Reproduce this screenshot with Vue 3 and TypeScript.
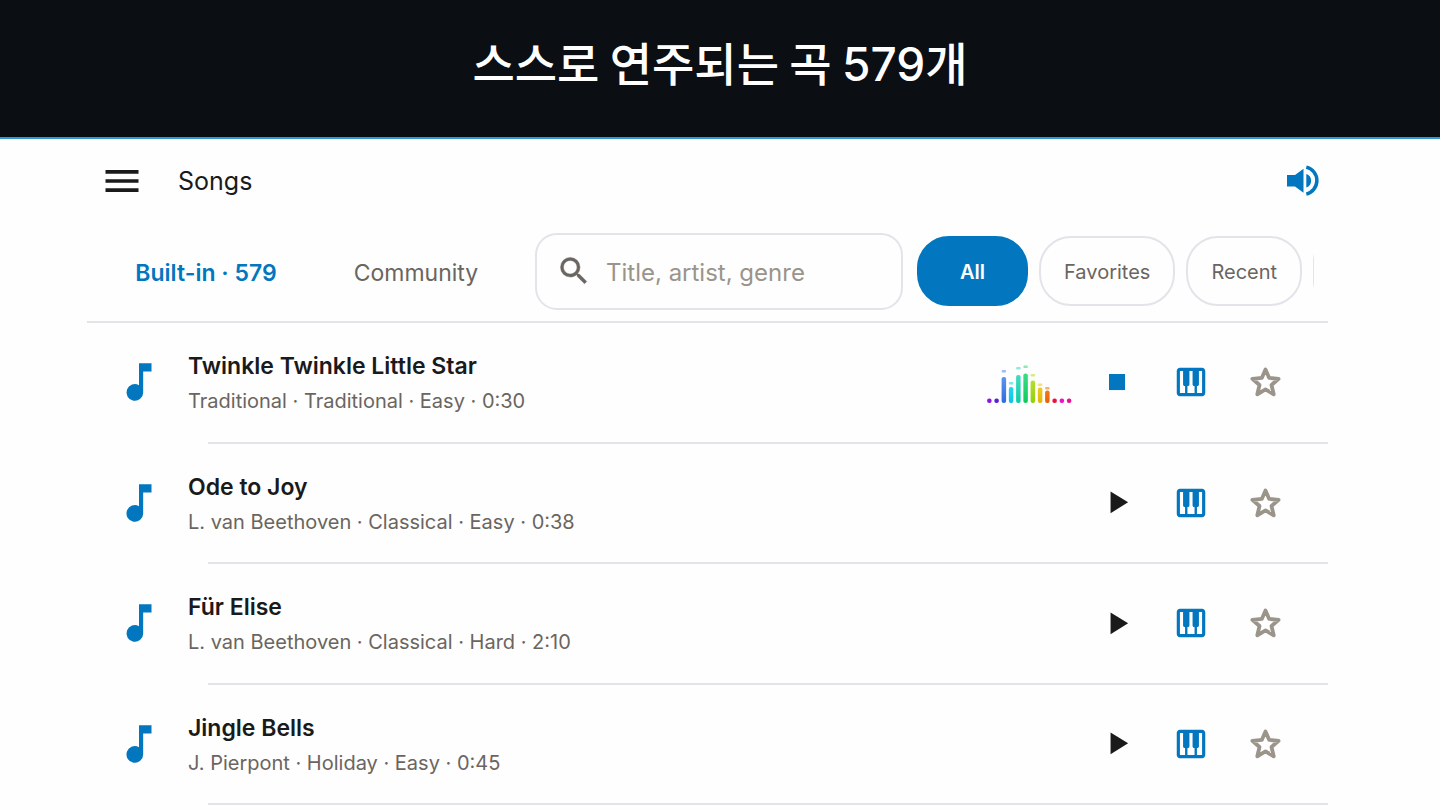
<script setup lang="ts">
import { ref } from 'vue'

interface Song {
  title: string
  composer: string
  genre: string
  level: string
  length: string
}

interface Bar {
  top: number
  peak: number | null
  from: string
  to: string
}

const songs: Song[] = [
  { title: 'Twinkle Twinkle Little Star', composer: 'Traditional', genre: 'Traditional', level: 'Easy', length: '0:30' },
  { title: 'Ode to Joy', composer: 'L. van Beethoven', genre: 'Classical', level: 'Easy', length: '0:38' },
  { title: 'Für Elise', composer: 'L. van Beethoven', genre: 'Classical', level: 'Hard', length: '2:10' },
  { title: 'Jingle Bells', composer: 'J. Pierpont', genre: 'Holiday', level: 'Easy', length: '0:45' },
]

const bars: Bar[] = [
  { top: 34.5, peak: null, from: '#8f14e0', to: '#8f14e0' },
  { top: 34.5, peak: null, from: '#5a1fd6', to: '#5a1fd6' },
  { top: 13, peak: 6, from: '#5b95f0', to: '#2f6be0' },
  { top: 23, peak: 18, from: '#22d8f2', to: '#0bc4e4' },
  { top: 11, peak: 3, from: '#43dcc0', to: '#0ccca4' },
  { top: 9.5, peak: 1.5, from: '#3ddc84', to: '#0acb5c' },
  { top: 16.5, peak: 10, from: '#b4e02c', to: '#93cf0a' },
  { top: 23.5, peak: 19.5, from: '#efcb22', to: '#e2b608' },
  { top: 26.5, peak: 23, from: '#f07a1c', to: '#e85f08' },
  { top: 34.5, peak: null, from: '#e8143c', to: '#e8143c' },
  { top: 34.5, peak: null, from: '#f010c8', to: '#f010c8' },
  { top: 34.5, peak: null, from: '#ec1090', to: '#ec1090' },
]

const filters = ['All', 'Favorites', 'Recent']
const activeFilter = ref('All')
const activeTab = ref('built-in')
const playing = ref(0)
const query = ref('')

function describe(song: Song): string {
  return [song.composer, song.genre, song.level, song.length].join(' · ')
}

function toggle(index: number): void {
  playing.value = playing.value === index ? -1 : index
}
</script>

<template>
  <div class="page">
    <header class="banner">
      <h1>스스로 연주되는 곡 <span class="count">579</span>개</h1>
    </header>

    <main class="panel">
      <div class="toolbar">
        <button class="icon-button menu" type="button" aria-label="Menu">
          <svg width="44" height="44" viewBox="0 0 24 24"><path d="M3 18h18v-2H3v2zm0-5h18v-2H3v2zm0-7v2h18V6H3z" fill="currentColor" /></svg>
        </button>
        <h2>Songs</h2>
        <button class="icon-button volume" type="button" aria-label="Volume">
          <svg width="32" height="32" viewBox="0 0 32 32">
            <path d="M0 10h8l8.500-6.300v24L8 21.400H0z" fill="currentColor" />
            <path d="M19.300 9a7.200 7.200 0 0 1 0 13.600z" fill="currentColor" />
            <path d="M19.300 2.100a13.900 13.900 0 0 1 0 27" fill="none" stroke="currentColor" stroke-width="3.500" />
          </svg>
        </button>
      </div>

      <div class="controls">
        <div class="tabs" role="tablist">
          <button type="button" role="tab" :aria-selected="activeTab === 'built-in'" :class="{ active: activeTab === 'built-in' }" @click="activeTab = 'built-in'">Built-in · 579</button>
          <button type="button" role="tab" :aria-selected="activeTab === 'community'" :class="{ active: activeTab === 'community' }" @click="activeTab = 'community'">Community</button>
        </div>
        <label class="search">
          <svg width="36" height="36" viewBox="0 0 24 24"><path d="M15.5 14h-.79l-.28-.27A6.47 6.47 0 0 0 16 9.5 6.5 6.5 0 1 0 9.5 16c1.61 0 3.09-.59 4.23-1.57l.27.28v.79l5 4.99L20.49 19l-4.99-5zm-6 0C7.01 14 5 11.99 5 9.5S7.01 5 9.5 5 14 7.01 14 9.5 11.99 14 9.5 14z" fill="currentColor" stroke="currentColor" stroke-width="0.3" /></svg>
          <input v-model="query" type="text" aria-label="Search songs" placeholder="Title, artist, genre" />
        </label>
        <div class="chips">
          <button
            v-for="name in filters"
            :key="name"
            type="button"
            class="chip"
            :class="{ active: activeFilter === name, wide: name === 'All' }"
            :aria-pressed="activeFilter === name"
            @click="activeFilter = name"
          >{{ name }}</button>
          <button type="button" class="chip" aria-label="More filters"></button>
        </div>
      </div>

      <ul class="songs">
        <li v-for="(song, index) in songs" :key="song.title">
          <div class="song">
            <svg class="note" width="50" height="50" viewBox="0 0 24 24"><path d="M12 3v10.55A4 4 0 1 0 14 17V7h4V3z" fill="currentColor" /></svg>
            <div class="text">
              <h3>{{ song.title }}</h3>
              <p>{{ describe(song) }}</p>
            </div>
            <svg v-if="playing === index" class="meter" width="88" height="44" viewBox="0 -4 88 44">
              <defs>
                <linearGradient v-for="(bar, i) in bars" :id="'bar-' + i" :key="i" x1="0" y1="0" x2="0" y2="1">
                  <stop offset="0" :stop-color="bar.from" />
                  <stop offset="1" :stop-color="bar.to" />
                </linearGradient>
              </defs>
              <g v-for="(bar, i) in bars" :key="i">
                <rect :x="1.1 + i * 7.25" :y="bar.top" width="4.5" :height="39 - bar.top" rx="2" :fill="`url(#bar-${i})`" />
                <rect v-if="bar.peak !== null" :x="1.1 + i * 7.25" :y="bar.peak" width="4.5" height="2.4" rx="1" :fill="bar.from" opacity="0.6" />
              </g>
            </svg>
            <div class="actions">
              <button type="button" class="icon-button" :class="playing === index ? 'stop' : 'play'" :aria-label="playing === index ? 'Stop' : 'Play'" @click="toggle(index)">
                <svg width="37" height="37" viewBox="0 0 24 24">
                  <path :d="playing === index ? 'M6.5 6.5h10.4v10.4H6.5z' : 'M7.5 4.9v14l11.400-7z'" fill="currentColor" />
                </svg>
              </button>
              <button type="button" class="icon-button keys" aria-label="Open on keyboard">
                <svg width="38" height="38" viewBox="0 0 24 24"><path d="M19 3H5c-1.1 0-2 .9-2 2v14c0 1.1.9 2 2 2h14c1.100 0 2-.9 2-2V5c0-1.100-.9-2-2-2zm-5 11.500h.25V19h-4.500v-4.500H10c.55 0 1-.45 1-1V5h2v8.500c0 .55.45 1 1 1zM5 5h2v8.500c0 .55.45 1 1 1h.25V19H5V5zm14 14h-3.250v-4.500H16c.55 0 1-.45 1-1V5h2v14z" fill="currentColor" /></svg>
              </button>
              <button type="button" class="icon-button star" aria-label="Favorite">
                <svg width="32" height="32" viewBox="0 0 32 32"><path d="M16.500 3.500l3.700 8.400 9.400.9-7.100 6.200 2.200 9.300-8.200-4.900-8.200 4.900 2.200-9.300-7.100-6.200 9.400-.9z" fill="none" stroke="currentColor" stroke-width="3.800" stroke-linejoin="round" /></svg>
              </button>
            </div>
          </div>
          <hr />
        </li>
      </ul>
    </main>
  </div>
</template>

<style>
body {
  margin: 0;
  background: #fefefe;
}
</style>

<style scoped>
.page {
  min-height: 100vh;
  display: flex;
  flex-direction: column;
  background: #fefefe;
  color: #1a1a1a;
  font-family: Inter, "Noto Sans CJK KR", sans-serif;
}

h1, h2, h3, p, ul {
  margin: 0;
  padding: 0;
}

button {
  border: 0;
  padding: 0;
  background: none;
  font: inherit;
  color: inherit;
  cursor: pointer;
}

svg {
  display: block;
  flex: none;
}

.banner {
  box-sizing: border-box;
  height: 139px;
  display: flex;
  align-items: center;
  justify-content: center;
  padding-bottom: 12px;
  background: #0b0e13;
  border-bottom: 2px solid #2b9ad6;
  color: #fff;
}

.banner h1 {
  font-family: "Noto Sans CJK KR", sans-serif;
  font-size: 46px;
  line-height: 64px;
  font-weight: 500;
}

.banner .count {
  font-family: Inter, sans-serif;
}

.panel {
  flex: 1;
  display: flex;
  flex-direction: column;
  margin: 0 112px 5px 87px;
}

.toolbar {
  height: 84px;
  display: flex;
  align-items: center;
  padding: 0 9px 0 13px;
}

.toolbar h2 {
  flex: 1;
  margin-left: 34px;
  font-size: 25px;
  font-weight: 400;
}

.icon-button {
  display: flex;
  align-items: center;
  justify-content: center;
}

.volume,
.stop,
.keys,
.note {
  color: #0277bf;
}

.controls {
  height: 96px;
  display: flex;
  align-items: center;
  gap: 14px;
  padding: 0 14px 2px;
  border-bottom: 2px solid #e3e4e9;
}

.tabs {
  flex: 0 0 420px;
  display: grid;
  grid-template-columns: 1fr 1fr;
  padding-top: 4px;
  font-size: 23px;
  line-height: 48px;
  color: #6b6560;
}

.tabs .active {
  color: #0277bf;
  font-weight: 600;
}

.search {
  flex: 1;
  min-width: 0;
  box-sizing: border-box;
  height: 77px;
  display: flex;
  align-items: center;
  gap: 14px;
  padding: 0 19px;
  border: 2px solid #e3e4e9;
  border-radius: 22px;
  color: #6b6560;
}

.search input {
  flex: 1;
  min-width: 0;
  padding: 2px 0 0;
  border: 0;
  outline: 0;
  background: none;
  font: inherit;
  font-size: 24px;
  color: #1a1a1a;
}

.search input::placeholder {
  color: #9a948a;
  opacity: 1;
}

.chips {
  flex: 0 0 397px;
  display: flex;
  gap: 11px;
  overflow: hidden;
}

.chip {
  flex: none;
  box-sizing: border-box;
  height: 70px;
  padding: 2px 23px 0;
  border: 2px solid #e3e4e9;
  border-radius: 32px;
  font-size: 20px;
  color: #6b6560;
}

.chip.wide {
  padding: 2px 41px 0;
}

.chip.active {
  border-color: #0277bf;
  background: #0277bf;
  color: #fff;
  font-weight: 600;
}

.songs {
  flex: 1;
  display: grid;
  grid-auto-rows: 1fr;
  list-style: none;
}

.songs li {
  display: flex;
  flex-direction: column;
}

.song {
  flex: 1;
  display: flex;
  align-items: center;
  padding: 0 26px 0 27px;
}

.text {
  flex: 1;
  margin-left: 24px;
  padding-top: 2px;
}

.text h3 {
  font-size: 23px;
  line-height: 36px;
  font-weight: 600;
}

.text p {
  font-size: 20px;
  line-height: 34px;
  color: #6b6560;
}

.meter {
  margin-right: 6px;
}

.actions {
  display: flex;
}

.actions .icon-button {
  width: 74px;
  height: 74px;
}

.star {
  color: #9a948a;
}

hr {
  width: auto;
  height: 2px;
  margin: 0 0 0 121px;
  border: 0;
  background: #e3e4e9;
}
</style>
